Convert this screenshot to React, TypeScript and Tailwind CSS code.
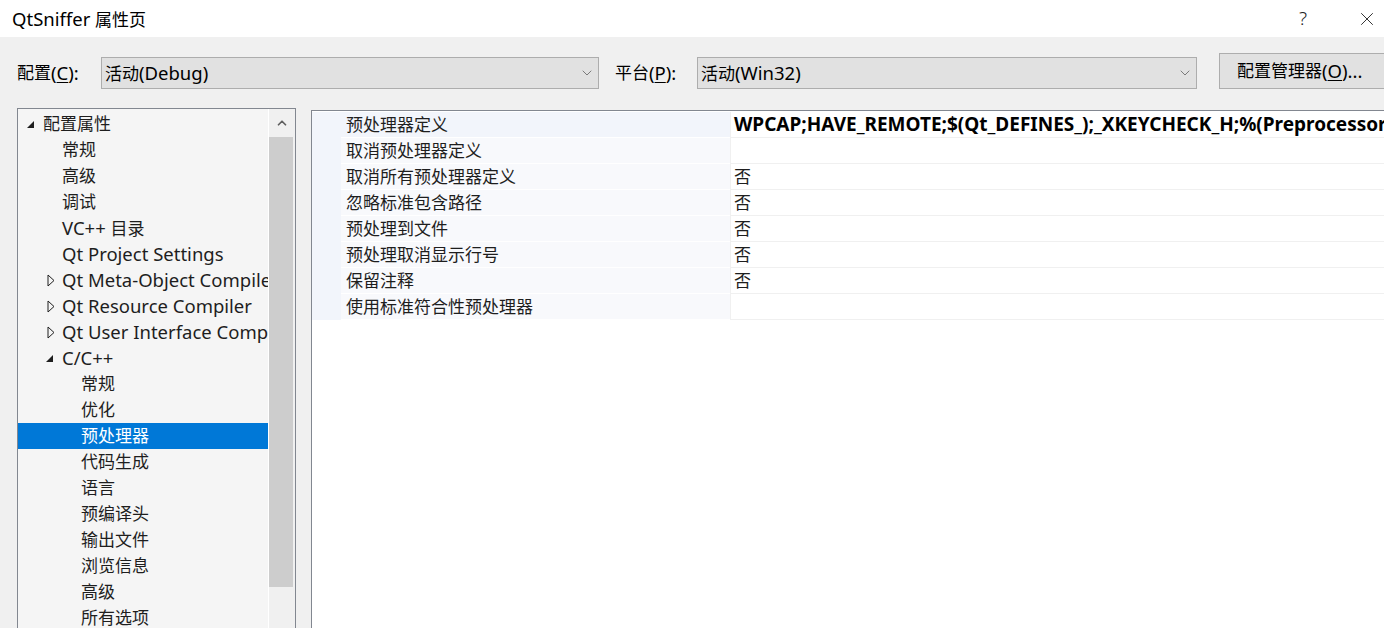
import { ChevronDown, ChevronUp, X } from "lucide-react";

type TreeItem = {
  label: string;
  level: number;
  expander?: "open" | "closed";
  selected?: boolean;
};

const TREE: TreeItem[] = [
  { label: "配置属性", level: 0, expander: "open" },
  { label: "常规", level: 1 },
  { label: "高级", level: 1 },
  { label: "调试", level: 1 },
  { label: "VC++ 目录", level: 1 },
  { label: "Qt Project Settings", level: 1 },
  { label: "Qt Meta-Object Compiler", level: 1, expander: "closed" },
  { label: "Qt Resource Compiler", level: 1, expander: "closed" },
  { label: "Qt User Interface Compiler", level: 1, expander: "closed" },
  { label: "C/C++", level: 1, expander: "open" },
  { label: "常规", level: 2 },
  { label: "优化", level: 2 },
  { label: "预处理器", level: 2, selected: true },
  { label: "代码生成", level: 2 },
  { label: "语言", level: 2 },
  { label: "预编译头", level: 2 },
  { label: "输出文件", level: 2 },
  { label: "浏览信息", level: 2 },
  { label: "高级", level: 2 },
  { label: "所有选项", level: 2 },
  { label: "命令行", level: 2 },
];

const PROPS: { name: string; value: string; bold?: boolean }[] = [
  {
    name: "预处理器定义",
    value: "WPCAP;HAVE_REMOTE;$(Qt_DEFINES_);_XKEYCHECK_H;%(PreprocessorDefinitions)",
    bold: true,
  },
  { name: "取消预处理器定义", value: "" },
  { name: "取消所有预处理器定义", value: "否" },
  { name: "忽略标准包含路径", value: "否" },
  { name: "预处理到文件", value: "否" },
  { name: "预处理取消显示行号", value: "否" },
  { name: "保留注释", value: "否" },
  { name: "使用标准符合性预处理器", value: "" },
];

const FONT = "font-['Segoe_UI','Noto_Sans','Noto_Sans_CJK_SC',sans-serif]";

// latin runs are drawn a bit larger so they match the YaHei/Segoe widths next to 17px CJK
function Mixed({ text }: { text: string }) {
  const parts = text.split(/([\u4e00-\u9fff]+)/).filter(Boolean);
  return (
    <>
      {parts.map((p, i) =>
        /[\u4e00-\u9fff]/.test(p) ? (
          <span key={i}>{p}</span>
        ) : (
          <span key={i} className="text-[18.5px]">
            {p}
          </span>
        )
      )}
    </>
  );
}

function Combo({ text, width }: { text: string; width: string }) {
  return (
    <div
      className={`flex h-[32px] ${width} shrink-0 items-center justify-between border border-[#adadad] bg-[#e1e1e1] pl-[3px] pr-[3px]`}
    >
      <span className="text-[17px] text-black">
        <Mixed text={text} />
      </span>
      <ChevronDown className="h-4 w-4 text-[#606060]" strokeWidth={1.2} />
    </div>
  );
}

function Expander({ kind }: { kind?: "open" | "closed" }) {
  if (kind === "open") {
    return (
      <svg width="9" height="9" viewBox="0 0 9 9" className="shrink-0">
        <polygon points="8,1 8,8 1,8" fill="#1e1e1e" />
      </svg>
    );
  }
  if (kind === "closed") {
    return (
      <svg width="8" height="13" viewBox="0 0 8 13" className="ml-[2px] shrink-0">
        <polygon points="1,1 7,6.5 1,12" fill="none" stroke="#1e1e1e" strokeWidth="1" />
      </svg>
    );
  }
  return <span className="w-[9px] shrink-0" />;
}

export default function App() {
  return (
    <div className={`flex h-[628px] w-[1384px] flex-col overflow-hidden bg-[#f0f0f0] ${FONT}`}>
      {/* title bar */}
      <div className="flex h-[37px] shrink-0 items-center justify-between bg-white pl-[12px]">
        <span className="text-[17px] text-black">
          <Mixed text="QtSniffer 属性页" />
        </span>
        <div className="flex items-center">
          <span className="mr-[49px] text-[19px] font-light text-[#222]">?</span>
          <X className="mr-[6px] h-[22px] w-[22px] text-[#222]" strokeWidth={1} />
        </div>
      </div>

      {/* config row */}
      <div className="flex shrink-0 items-end overflow-hidden pl-[17px] pt-[16px] text-[17px]">
        <div className="flex h-[32px] w-[84px] shrink-0 items-center">
          配置<span className="text-[18.5px]">(<span className="underline underline-offset-2">C</span>):</span>
        </div>
        <Combo text="活动(Debug)" width="w-[498px]" />
        <div className="ml-[16px] flex h-[32px] w-[82px] shrink-0 items-center">
          平台<span className="text-[18.5px]">(<span className="underline underline-offset-2">P</span>):</span>
        </div>
        <Combo text="活动(Win32)" width="w-[500px]" />
        <div className="ml-[22px] flex h-[36px] w-[180px] shrink-0 items-center border border-[#adadad] bg-[#e1e1e1] pl-[17px]">
          配置管理器
          <span className="text-[18.5px]">
            (<span className="underline underline-offset-2">O</span>)...
          </span>
        </div>
      </div>

      {/* panels */}
      <div className="flex min-h-0 flex-1 pl-[17px] pt-[19px]">
        {/* tree */}
        <div className="flex w-[279px] shrink-0 border border-b-0 border-[#828790] bg-[#f5f5f5]">
          <div className="w-[250px] overflow-hidden pt-[2px]">
            {TREE.map((t, i) => (
              <div
                key={i}
                className={`flex h-[26px] items-center whitespace-nowrap text-[17px] ${
                  t.selected ? "bg-[#0078d7] text-white" : "text-[#1e1e1e]"
                }`}
                style={{ paddingLeft: 8 + t.level * 19 }}
              >
                <div className="flex w-[17px] shrink-0 items-center justify-start">
                  <Expander kind={t.expander} />
                </div>
                <span>
                  <Mixed text={t.label} />
                </span>
              </div>
            ))}
          </div>
          <div className="w-[1px] bg-white" />
          <div className="flex w-[26px] flex-col bg-[#f0f0f0]">
            <div className="flex h-[28px] items-center justify-center">
              <ChevronUp className="h-[14px] w-[14px] text-[#606060]" strokeWidth={3} />
            </div>
            <div className="mr-[2px] h-[450px] bg-[#cdcdcd]" />
          </div>
        </div>

        {/* property grid */}
        <div className="ml-[15px] mt-[2px] flex min-w-0 flex-1 flex-col border-l border-t border-[#828790] bg-white">
          <div className="flex pt-[1px]">
            <div className="w-[29px] shrink-0 bg-[#f2f5fb]" />
            <div className="min-w-0 flex-1">
              {PROPS.map((p, i) => (
                <div key={i} className="flex h-[26px] text-[17px]">
                  <div
                    className={`flex w-[389px] shrink-0 items-center border-b border-white pl-[5px] text-[#1e1e1e] ${
                      i === 0 ? "bg-[#f2f5fb]" : "bg-[#f8f9fc]"
                    }`}
                  >
                    {p.name}
                  </div>
                  <div
                    className={`flex min-w-0 flex-1 items-center overflow-hidden whitespace-nowrap border-b border-l border-[#f0f0f0] pl-[3px] ${
                      p.bold ? "text-[19px] font-bold text-black" : "text-[#1e1e1e]"
                    }`}
                  >
                    {p.value}
                  </div>
                </div>
              ))}
            </div>
          </div>
        </div>
      </div>
    </div>
  );
}
